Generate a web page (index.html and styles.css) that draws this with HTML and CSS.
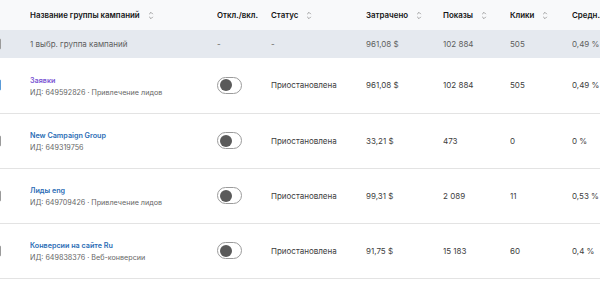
FILE: index.html
```html
<!DOCTYPE html>
<html lang="ru">
<head>
<meta charset="utf-8">
<link rel="stylesheet" href="styles.css">
</head>
<body>
<table class="grid">
  <colgroup>
    <col class="c-check"><col class="c-name"><col class="c-toggle"><col class="c-status"><col class="c-spent"><col class="c-imp"><col class="c-clicks"><col class="c-ctr">
  </colgroup>
  <thead>
    <tr class="head">
      <th></th>
      <th><span class="th">Название группы кампаний <svg class="sort" viewBox="0 0 6 10"><path d="M1 3.5 3 1.5 5 3.5M1 6.5 3 8.5 5 6.5"/></svg></span></th>
      <th><span class="th">Откл./вкл.</span></th>
      <th><span class="th">Статус <svg class="sort" viewBox="0 0 6 10"><path d="M1 3.5 3 1.5 5 3.5M1 6.5 3 8.5 5 6.5"/></svg></span></th>
      <th><span class="th">Затрачено <svg class="sort" viewBox="0 0 6 10"><path d="M1 3.5 3 1.5 5 3.5M1 6.5 3 8.5 5 6.5"/></svg></span></th>
      <th><span class="th">Показы <svg class="sort" viewBox="0 0 6 10"><path d="M1 3.5 3 1.5 5 3.5M1 6.5 3 8.5 5 6.5"/></svg></span></th>
      <th><span class="th">Клики <svg class="sort" viewBox="0 0 6 10"><path d="M1 3.5 3 1.5 5 3.5M1 6.5 3 8.5 5 6.5"/></svg></span></th>
      <th><span class="th">Средн. цена</span></th>
    </tr>
  </thead>
  <tbody>
    <tr class="summary">
      <td><span class="cb"></span></td>
      <td>1 выбр. группа кампаний</td>
      <td>-</td>
      <td>-</td>
      <td>961,08 $</td>
      <td>102 884</td>
      <td>505</td>
      <td>0,49 %</td>
    </tr>
    <tr class="row">
      <td><span class="cb checked"></span></td>
      <td><a class="name visited">Заявки</a><div class="meta">ИД: 649592826 · Привлечение лидов</div></td>
      <td><span class="toggle"><span class="knob"></span></span></td>
      <td>Приостановлена</td>
      <td>961,08 $</td>
      <td>102 884</td>
      <td>505</td>
      <td>0,49 %</td>
    </tr>
    <tr class="row">
      <td><span class="cb"></span></td>
      <td><a class="name">New Campaign Group</a><div class="meta">ИД: 649319756</div></td>
      <td><span class="toggle"><span class="knob"></span></span></td>
      <td>Приостановлена</td>
      <td>33,21 $</td>
      <td>473</td>
      <td>0</td>
      <td>0 %</td>
    </tr>
    <tr class="row">
      <td><span class="cb"></span></td>
      <td><a class="name">Лиды eng</a><div class="meta">ИД: 649709426 · Привлечение лидов</div></td>
      <td><span class="toggle"><span class="knob"></span></span></td>
      <td>Приостановлена</td>
      <td>99,31 $</td>
      <td>2 089</td>
      <td>11</td>
      <td>0,53 %</td>
    </tr>
    <tr class="row">
      <td><span class="cb"></span></td>
      <td><a class="name">Конверсии на сайте Ru</a><div class="meta">ИД: 649838376 · Веб-конверсии</div></td>
      <td><span class="toggle"><span class="knob"></span></span></td>
      <td>Приостановлена</td>
      <td>91,75 $</td>
      <td>15 183</td>
      <td>60</td>
      <td>0,4 %</td>
    </tr>
  </tbody>
</table>
</body>
</html>
```

FILE: styles.css
```css
html, body {
  margin: 0;
  padding: 0;
  background: #ffffff;
  overflow: hidden;
  width: 600px;
  height: 284px;
}
body {
  font-family: Inter, "Liberation Sans", Arial, sans-serif;
  font-size: 8px;
  color: #3d3d3d;
}
.grid {
  border-collapse: collapse;
  table-layout: fixed;
  width: 660px;
}
.c-check { width: 30px; }
.c-name { width: 187px; }
.c-toggle { width: 54px; }
.c-status { width: 95px; }
.c-spent { width: 77px; }
.c-imp { width: 67px; }
.c-clicks { width: 62px; }
.c-ctr { width: 88px; }
th, td {
  padding: 0;
  text-align: left;
  vertical-align: middle;
  white-space: nowrap;
  overflow: hidden;
}
.head {
  height: 30px;
  background: #f8f9fa;
}
.head th {
  font-weight: 600;
  color: #141414;
  font-size: 7.9px;
}
.th {
  display: inline-flex;
  align-items: center;
  gap: 8px;
}
.sort {
  width: 6px;
  height: 9px;
  fill: none;
  stroke: #8a8a8a;
  stroke-width: 0.9;
}
.summary {
  height: 28px;
  background: #e5e9ef;
  color: #5e5e5e;
}
.row {
  height: 55px;
  border-bottom: 1px solid #e3e3e3;
}
.cb {
  display: block;
  width: 12px;
  height: 12px;
  margin-left: -11px;
  border: 1px solid #9a9a9a;
  border-radius: 2px;
  box-sizing: border-box;
}
.cb.checked {
  border-color: #5a9bd8;
  background: #5a9bd8;
}
.name {
  display: block;
  color: #2a6cb5;
  font-weight: 600;
  font-size: 7.2px;
  margin-bottom: 3px;
  margin-top: 2px;
}
.name.visited {
  color: #7a55d3;
}
.meta {
  color: #666666;
  font-size: 7.2px;
}
.toggle {
  display: block;
  width: 25px;
  height: 17px;
  border: 1px solid #9b9b9b;
  border-radius: 9px;
  box-sizing: border-box;
  padding: 1.5px;
}
.knob {
  display: block;
  width: 12px;
  height: 12px;
  border-radius: 50%;
  background: #5a5a5a;
}
```
